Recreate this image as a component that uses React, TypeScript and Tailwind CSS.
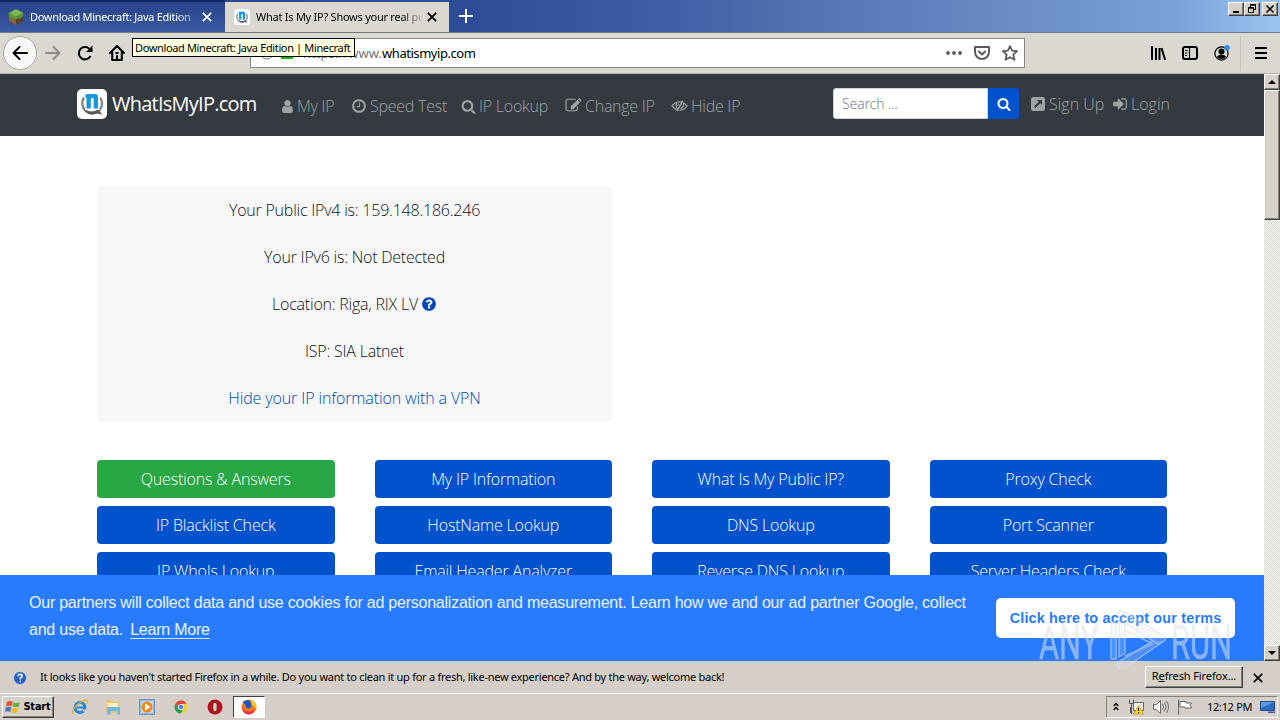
import type { ReactNode } from 'react'

const tools = [
  'Questions & Answers',
  'My IP Information',
  'What Is My Public IP?',
  'Proxy Check',
  'IP Blacklist Check',
  'HostName Lookup',
  'DNS Lookup',
  'Port Scanner',
  'IP WhoIs Lookup',
  'Email Header Analyzer',
  'Reverse DNS Lookup',
  'Server Headers Check',
]

const paths = {
  user: 'M1536 1399q0 109-62.5 187t-150.5 78h-854q-88 0-150.5-78t-62.5-187q0-85 8.5-160.5t31.5-152 58.5-131 94-89 134.5-34.5q131 128 313 128t313-128q76 0 134.5 34.5t94 89 58.5 131 31.5 152 8.5 160.5zm-256-887q0 159-112.5 271.5t-271.5 112.5-271.5-112.5-112.5-271.5 112.5-271.5 271.5-112.5 271.5 112.5 112.5 271.5z',
  clock: 'M1024 544v448q0 14-9 23t-23 9h-320q-14 0-23-9t-9-23v-64q0-14 9-23t23-9h224v-352q0-14 9-23t23-9h64q14 0 23 9t9 23zm416 352q0-148-73-273t-198-198-273-73-273 73-198 198-73 273 73 273 198 198 273 73 273-73 198-198 73-273zm224 0q0 209-103 385.5t-279.5 279.5-385.5 103-385.5-103-279.5-279.5-103-385.5 103-385.5 279.5-279.5 385.5-103 385.5 103 279.5 279.5 103 385.5z',
  search: 'M1216 832q0-185-131.5-316.5t-316.5-131.5-316.5 131.5-131.5 316.5 131.5 316.5 316.5 131.5 316.5-131.5 131.5-316.5zm512 832q0 52-38 90t-90 38q-54 0-90-38l-343-342q-179 124-399 124-143 0-273.5-55.5t-225-150-150-225-55.5-273.5 55.5-273.5 150-225 225-150 273.5-55.5 273.5 55.5 225 150 150 225 55.5 273.5q0 220-124 399l343 343q37 37 37 90z',
  edit: 'M1330 1000l130-130v330q0 119-84.5 203.5t-203.5 84.5h-832q-119 0-203.5-84.5t-84.5-203.5v-832q0-119 84.5-203.5t203.5-84.5h832q60 0 110 20l-108 108h-834q-66 0-113 47t-47 113v832q0 66 47 113t113 47h832q66 0 113-47t47-113zM640 960l760-760 288 288-760 760h-288zM1460 140l90-90q28-28 68-28t68 28l152 152q28 28 28 68t-28 68l-90 90z',
  signIn: 'M1312 896q0 26-19 45l-544 544q-19 19-45 19t-45-19-19-45v-288h-448q-26 0-45-19t-19-45v-384q0-26 19-45t45-19h448v-288q0-26 19-45t45-19 45 19l544 544q19 19 19 45zm352-352v704q0 119-84.5 203.5t-203.5 84.5h-320q-13 0-22.5-9.5t-9.5-22.5v-64q0-32 32-32h320q66 0 113-47t47-113v-704q0-66-47-113t-113-47h-320q-32 0-32-32v-64q0-32 32-32h320q119 0 203.5 84.5t84.5 203.5z',
  question: 'M1024 1376v-192q0-14-9-23t-23-9h-192q-14 0-23 9t-9 23v192q0 14 9 23t23 9h192q14 0 23-9t9-23zm256-672q0-88-55.5-163t-138.5-116-170-41q-243 0-371 213-15 24 8 42l132 100q7 6 19 6 16 0 25-12 53-68 86-92 34-24 86-24 48 0 85.5 26t37.5 59q0 38-20 61t-68 45q-63 28-115.5 86.5t-52.5 125.5v36q0 14 9 23t23 9h192q14 0 23-9t9-23q0-19 21.5-49.5t54.5-49.5q32-18 49-28.5t46-35 44.5-48 28-60.5 12.5-81zm384 192q0 209-103 385.5t-279.5 279.5-385.5 103-385.5-103-279.5-279.5-103-385.5 103-385.5 279.5-279.5 385.5-103 385.5 103 279.5 279.5 103 385.5z',
}

function Glyph({ name, className }: { name: keyof typeof paths; className: string }) {
  return (
    <svg viewBox="0 0 1792 1792" fill="currentColor" className={`shrink-0 ${className}`}>
      <path d={paths[name]} />
    </svg>
  )
}

function EyeSlash() {
  return (
    <svg viewBox="0 0 18 16" className="w-[17px] h-4 shrink-0" fill="none" stroke="currentColor" strokeWidth="1.3">
      <path d="M6.5 12.2Q3.5 11 1 8 4.5 3.500 9 3.500l1.600.2M12.500 4.500Q15 5.500 17 8q-3 4.500-8.200 4.500" />
      <path d="M12.300 2.300 6.500 13.500" strokeWidth="1.5" />
      <path d="M7 11Q3.800 7.500 6.500 4.600M13 5.500q1 3.500-3 5.500" />
      <path d="M8.500 5.500Q7 6 7.200 8" strokeWidth="1" />
    </svg>
  )
}

function SignUpIcon() {
  return (
    <svg viewBox="0 0 14 14" className="w-3.5 h-3.5 shrink-0">
      <rect width="14" height="14" rx="2.5" fill="currentColor" />
      <path d="M6 3h5v5L9.300 6.300 4.500 11 3 9.500l4.700-4.800z" fill="#343a40" />
    </svg>
  )
}

function SiteLogo({ className }: { className: string }) {
  return (
    <svg viewBox="0 0 30 30" className={`shrink-0 ${className}`}>
      <rect width="30" height="30" rx="5" fill="#fff" />
      <path d="M7 8.500C3.500 14 5.500 21 11.500 23.500 17 25.500 23 23 24.500 17.500 25.500 14 24.800 11 23 8.500" fill="none" stroke="#8d8f92" strokeWidth="2.4" />
      <path d="M6 17.500C9 23.500 17 24.500 23.500 18.500L22.500 22l3 3.800-5.500-1.300C13 27.500 7.500 24 6 17.500z" fill="#5a5a5c" />
      <path d="M8 4h11.500q3 0 3 3v14H8z" fill="#fff" />
      <path d="M9.500 5h8.500q3 0 3 3v11.500h-4.300V9.200h-2.900v10.300H9.500V9L8 7z" fill="#1797e2" />
    </svg>
  )
}

function Close({ className }: { className: string }) {
  return (
    <svg viewBox="0 0 10 10" className={`shrink-0 ${className}`}>
      <path d="M.8.8l8.4 8.4M9.2.8.8 9.2" stroke="currentColor" strokeWidth="1.7" />
    </svg>
  )
}

function WinButton({ className, children }: { className: string; children?: ReactNode }) {
  return (
    <div
      className={`flex items-center justify-center bg-[#d6d2ca] border border-t-white border-l-white border-r-[#404040] border-b-[#404040] shadow-[inset_-1px_-1px_0_#85827b] ${className}`}
    >
      {children}
    </div>
  )
}

function TabBar() {
  return (
    <div className="flex h-[33px] border-b border-[#75777c] bg-[linear-gradient(90deg,#2b4990_0%,#2c4c95_36%,#3d5fa5_52%,#5577b4_65%,#6d92cb_82%,#7ba2d8_92%,#9cc4f0_100%)]">
      <div className="flex items-center w-[225px] border-t-2 border-[#0e2568] bg-[linear-gradient(180deg,#284489,#3a59a2)] pl-2 text-white">
        <svg viewBox="0 0 16 16" className="w-4 h-4 shrink-0">
          <path d="M8 0l7.500 4L8 8 .5 4z" fill="#7cb84b" />
          <path d="M.5 4L8 8v8l-6.500-3.500z" fill="#86603f" />
          <path d="M15.500 4L8 8v8l6.500-3.500z" fill="#5b3f28" />
          <path d="M.5 4L8 8v2.500L6 9.500l-1 1-4-3zM15.500 4L8 8v2.500l3-1.500 1 1 3-3z" fill="#5a9636" />
        </svg>
        <span className="ml-1.5 w-[165px] whitespace-nowrap font-[Tahoma,'Noto_Sans',sans-serif] text-[11px] tracking-[-0.3px] [mask-image:linear-gradient(90deg,#000_88%,#0006)]">
          Download Minecraft: Java Edition
        </span>
        <Close className="w-2.5 h-2.5 ml-[7px]" />
      </div>
      <div className="flex items-center w-[224px] mt-0.5 pl-[9px] bg-[#dbd8d1] text-black">
        <SiteLogo className="w-4 h-4" />
        <span className="ml-1.5 w-[165px] whitespace-nowrap font-[Tahoma,'Noto_Sans',sans-serif] text-[11px] tracking-[-0.25px] [mask-image:linear-gradient(90deg,#000_88%,#0003)]">
          What Is My IP? Shows your real pu
        </span>
        <Close className="w-2.5 h-2.5 ml-1.5" />
      </div>
      <svg viewBox="0 0 14 14" className="w-3.5 h-3.5 mt-[9px] ml-2.5">
        <path d="M7 0v14M0 7h14" stroke="#fff" strokeWidth="2" />
      </svg>
      <div className="flex ml-auto mt-0.5 mr-0.5 h-3.5">
        <WinButton className="w-4 h-3.5">
          <svg viewBox="0 0 12 10" className="w-3 h-2.5"><path d="M3 8h6" stroke="#000" strokeWidth="2" /></svg>
        </WinButton>
        <WinButton className="w-4 h-3.5">
          <svg viewBox="0 0 12 10" className="w-3 h-2.5" fill="none" stroke="#000">
            <path d="M4.500 3V.5h5v5H8M4 1.200h6M2.500 3.500h5v5h-5zM2 4.200h6" />
          </svg>
        </WinButton>
        <WinButton className="w-4 h-3.5 ml-0.5">
          <svg viewBox="0 0 12 10" className="w-3 h-2.5"><path d="M2.500 1.500l7 7M9.500 1.500l-7 7" stroke="#000" strokeWidth="1.5" /></svg>
        </WinButton>
      </div>
    </div>
  )
}

function Toolbar() {
  return (
    <div className="flex items-center h-[41px] bg-[#dbd8d1] border-b border-[#b5b2ac] pl-[3px] text-black">
      <div className="flex items-center justify-center w-[34px] h-[34px] rounded-full bg-[#f8f7f6] border border-[#a9a6a1]">
        <svg viewBox="0 0 16 16" className="w-4 h-4" fill="none" stroke="currentColor" strokeWidth="2" strokeLinecap="round" strokeLinejoin="round">
          <path d="M15 8H1.500M7.500 2l-6 6 6 6" />
        </svg>
      </div>
      <svg viewBox="0 0 16 16" className="w-4 h-4 ml-2 text-[#8e8c88]" fill="none" stroke="currentColor" strokeWidth="2" strokeLinecap="round" strokeLinejoin="round">
        <path d="M1 8h13.500M8.500 2l6 6-6 6" />
      </svg>
      <svg viewBox="0 0 16 16" className="w-4 h-4 ml-4" fill="none" stroke="currentColor" strokeWidth="2">
        <path d="M13.500 11A6.200 6.200 0 1 1 12.300 3.700" />
        <path d="M15.500.5v6.500H9z" fill="currentColor" stroke="none" />
      </svg>
      <svg viewBox="0 0 16 16" className="w-4 h-4 ml-4" fill="none" stroke="currentColor" strokeWidth="2" strokeLinejoin="round" strokeLinecap="round">
        <path d="M1 8l7-7 7 7M3.200 7v8h9.600V7M8 15v-4" />
        <path d="M6.500 7h3v2h-3z" fill="currentColor" stroke="none" />
      </svg>
      <div className="flex items-center w-[775px] h-[30px] ml-[125px] bg-white border border-[#8b8984] pl-[9px] pr-1.5">
        <svg viewBox="0 0 14 14" className="w-3.5 h-3.5"><circle cx="7" cy="7" r="6" fill="none" stroke="#777" /></svg>
        <span className="w-3 h-3 ml-[7px] bg-[#12bc00]" />
        <span className="ml-[10px] pt-px font-[Tahoma,'Noto_Sans',sans-serif] text-[13px] tracking-[-0.45px] text-[#777]">
          <span className="tracking-[0.05px]">https://www.</span><span className="text-black">whatismyip.com</span>
        </span>
        <div className="flex items-center ml-auto text-[#5b5b5b]">
          <svg viewBox="0 0 16 4" className="w-4 h-1" fill="currentColor">
            <circle cx="2" cy="2" r="1.9" /><circle cx="8" cy="2" r="1.9" /><circle cx="14" cy="2" r="1.9" />
          </svg>
          <svg viewBox="0 0 16 16" className="w-4 h-4 ml-3" fill="none" stroke="currentColor" strokeWidth="2" strokeLinecap="round" strokeLinejoin="round">
            <path d="M1 2h14v5a7 7 0 0 1-14 0zM4.800 6.500L8 9.500l3.200-3" />
          </svg>
          <svg viewBox="0 0 16 16" className="w-4 h-4 ml-3" fill="none" stroke="currentColor" strokeWidth="1.8" strokeLinejoin="round">
            <path d="M8 1l2.100 4.700 5 .5-3.800 3.400 1.200 5.200L8 12.200l-4.500 2.600 1.200-5.200L.9 6.200l5-.5z" />
          </svg>
        </div>
      </div>
      <svg viewBox="0 0 16 16" className="w-4 h-4 ml-[125px]" stroke="currentColor">
        <path d="M2 1v14M6 3v12M9.500 3v12M11.500 3l3.700 12" strokeWidth="2" />
      </svg>
      <svg viewBox="0 0 16 16" className="w-4 h-4 ml-4" fill="none" stroke="currentColor" strokeWidth="2">
        <rect x="1" y="2" width="14" height="12" rx="2" />
        <path d="M7.500 2v12M3 5.500h2.500M3 8h2.500M3 10.500h2" strokeWidth="1.2" />
      </svg>
      <svg viewBox="0 0 16 16" className="w-4 h-4 ml-4">
        <circle cx="7.500" cy="8.500" r="6.600" fill="none" stroke="#000" strokeWidth="1.200" />
        <circle cx="7.500" cy="6.500" r="3" />
        <path d="M2.800 12Q4 9.500 7.500 9.500t4.700 2.500q-4.700 4-9.400 0z" />
        <circle cx="13" cy="2.800" r="2.800" fill="#2f8fe8" />
      </svg>
      <span className="w-px h-[34px] ml-[10px] bg-[#c4c1bb]" />
      <svg viewBox="0 0 12 12" className="w-3 h-3 ml-[14px]"><path d="M0 1h12M0 6h12M0 11h12" stroke="#000" strokeWidth="1.8" /></svg>
    </div>
  )
}

function SiteHeader() {
  return (
    <header className="flex h-[62px] bg-[#343a40] pl-[77px] text-[#a0a3a6] text-[16px] leading-6 font-light tracking-[-0.25px] whitespace-nowrap">
      <SiteLogo className="w-[30px] h-[30px] mt-[15px]" />
      <span className="ml-[5px] mt-[15px] w-[145px] text-[20px] leading-[30px] font-normal text-white tracking-[-0.75px]">WhatIsMyIP.com</span>
      <nav className="flex mt-5 ml-6 h-6">
        <div className="flex items-center w-[71px] gap-0.5"><Glyph name="user" className="w-[15px] h-[15px] -ml-px" />My IP</div>
        <div className="flex items-center w-[109px] gap-[3px]"><Glyph name="clock" className="w-4 h-4 -ml-px" />Speed Test</div>
        <div className="flex items-center w-[104px] gap-[3px]"><Glyph name="search" className="w-[15px] h-[15px]" />IP Lookup</div>
        <div className="flex items-center w-[106px] gap-1"><Glyph name="edit" className="w-4 h-4" />Change IP</div>
        <div className="flex items-center gap-[3px]"><EyeSlash />Hide IP</div>
      </nav>
      <div className="flex ml-auto mr-[94px] mt-[14px]">
        <div className="w-[155px] h-[31px] bg-white border border-[#ced4da] rounded-l-[3px] px-2 text-[14px] leading-[30px] tracking-[-0.1px] text-[#6c757d]">Search ...</div>
        <div className="flex items-center justify-center w-[31px] h-[31px] bg-[#0052cc] rounded-r-[3px] text-white"><Glyph name="search" className="w-3.5 h-3.5" /></div>
        <div className="flex items-center h-8 w-[82px] ml-3 gap-1 tracking-normal"><SignUpIcon />Sign Up</div>
        <div className="flex items-center h-8 w-[57px] gap-[3px] tracking-normal"><Glyph name="signIn" className="w-4 h-4 -ml-px" />Login</div>
      </div>
    </header>
  )
}

function CookieBar() {
  return (
    <div className="absolute inset-x-0 bottom-0 flex h-[86px] bg-[#287bff] pl-[29px] pr-[29px] text-white">
      <p className="w-[940px] pt-[14px] font-['Liberation_Sans',sans-serif] text-[16px] leading-[27px] tracking-[-0.23px] text-white/90 whitespace-nowrap">
        Our partners will collect data and use cookies for ad personalization and measurement. Learn how we and our ad partner Google, collect
        <br />
        and use data. <span className="ml-[3px] inline-block h-[18px] leading-[18px] border-b border-white/80">Learn More</span>
      </p>
      <button className="w-[239px] h-10 mt-[23px] ml-auto pt-0.5 bg-white rounded-[5px] font-['Liberation_Sans',sans-serif] font-bold text-[14.4px] tracking-[0.18px] text-[#287bff] whitespace-nowrap">
        Click here to accept our terms
      </button>
    </div>
  )
}

function Scrollbar() {
  return (
    <div className="flex flex-col w-4 bg-[repeating-conic-gradient(#fff_0_25%,#d6d2ca_0_50%)] bg-[length:2px_2px]">
      <WinButton className="h-4">
        <svg viewBox="0 0 8 4" className="w-2 h-1"><path d="M0 4l4-4 4 4z" /></svg>
      </WinButton>
      <WinButton className="h-[130px]" />
      <WinButton className="h-4 mt-auto">
        <svg viewBox="0 0 8 4" className="w-2 h-1"><path d="M0 0l4 4 4-4z" /></svg>
      </WinButton>
    </div>
  )
}

function Page() {
  return (
    <div className="flex h-[587px]">
      <main className="relative flex-1 overflow-hidden bg-white font-['Open_Sans','Noto_Sans',sans-serif]">
        <SiteHeader />
        <section className="w-[515px] h-[236px] ml-[97px] mt-[50px] pt-3 bg-[#f7f7f7] rounded-[4px] flex flex-col gap-[23px] text-center text-[16px] leading-6 tracking-[-0.22px] text-[#111417] font-light">
          <p>Your Public IPv4 is: 159.148.186.246</p>
          <p>Your IPv6 is: Not Detected</p>
          <p className="flex items-center justify-center gap-[3px]">
            Location: Riga, RIX LV <Glyph name="question" className="w-4 h-4 text-[#0047b3]" />
          </p>
          <p>ISP: SIA Latnet</p>
          <p className="text-[#0047b3] tracking-[-0.12px]">Hide your IP information with a VPN</p>
        </section>
        <section className="grid grid-cols-4 gap-x-10 gap-y-2 w-[1070px] ml-[97px] mt-[38px]">
          {tools.map((tool, i) => (
            <div
              key={tool}
              className={`h-[38px] rounded-[4px] text-center text-[16px] leading-[39px] tracking-[-0.18px] text-white font-light ${i === 0 ? 'bg-[#28a745]' : 'bg-[#0052cc]'}`}
            >
              {tool}
            </div>
          ))}
        </section>
        <CookieBar />
      </main>
      <Scrollbar />
    </div>
  )
}

function Notification() {
  return (
    <div className="flex items-center h-8 bg-[#d6cec8] border-t border-[#d4d0b8] pl-[13px] pr-[17px] text-black font-[Tahoma,'Noto_Sans',sans-serif] text-[11px] tracking-[-0.27px]">
      <svg viewBox="0 0 14 14" className="w-3.5 h-3.5">
        <circle cx="7" cy="7" r="6.5" fill="#2d5fc4" stroke="#c5cde0" />
        <path d="M5 5.200Q5.200 3.200 7.200 3.200 9.200 3.300 9.200 5 9.200 6.200 7.300 7v1.500M7.300 9.700v1.500" fill="none" stroke="#fff" strokeWidth="1.4" />
      </svg>
      <span className="ml-[13px] whitespace-nowrap">
        It looks like you haven't started Firefox in a while. Do you want to clean it up for a fresh, like-new experience? And by the way, welcome back!
      </span>
      <WinButton className="w-[98px] h-[22px] ml-auto -mt-0.5 tracking-[-0.1px] whitespace-nowrap">
        <span>R<u>e</u>fresh Firefox...</span>
      </WinButton>
      <Close className="w-2.5 h-2.5 ml-[10px]" />
    </div>
  )
}

function Taskbar() {
  return (
    <div className="flex items-center h-[27px] border-t border-white bg-[#d6cec8] pl-0.5 pr-0.5 text-black">
      <WinButton className="w-[52px] h-[22px] font-[Tahoma,'DejaVu_Sans_Condensed',sans-serif] font-bold text-[11px] tracking-[-0.2px] gap-0.5">
        <svg viewBox="0 0 16 16" className="w-4 h-4">
          <path d="M2 3q3-2 5.500 0L6.500 7.500Q4 6 1 7.300z" fill="#e8502b" />
          <path d="M8.500 3.200q3 1.500 6.500-.2L13.800 7.400q-3 1.500-6.300.2z" fill="#6fae38" />
          <path d="M.8 8.500q3-1.500 5.500 0L5.200 13Q2.500 11.500 0 13z" fill="#3d78cf" />
          <path d="M7.200 8.700q3 1.500 6.300.2L12.300 13.300q-3 1.500-6.200 0z" fill="#f5b921" />
        </svg>
        Start
      </WinButton>
      <svg viewBox="0 0 16 16" className="w-4 h-4 ml-[18px]">
        <circle cx="8" cy="8.500" r="5" fill="none" stroke="#2284d8" strokeWidth="3" />
        <path d="M5 8.500h9" stroke="#2284d8" strokeWidth="2" />
        <path d="M11 10.500h5v2h-5z" fill="#d6cec8" />
        <path d="M1 15Q-1 10 7 4.500 14-.5 15.500 2q.3 1-1 3" fill="none" stroke="#e6b32a" strokeWidth="1.3" />
      </svg>
      <svg viewBox="0 0 16 16" className="w-4 h-4 ml-[17px]">
        <path d="M1 1h5l1 1.500h7.500V14H1z" fill="#e7ca6a" />
        <path d="M2.500 4H13v4H2.500z" fill="#fff4bf" />
        <path d="M2 8h13v7.500h-2.500V12h-7v3.500H2z" fill="#72b8e4" />
      </svg>
      <svg viewBox="0 0 16 16" className="w-4 h-4 ml-[18px]">
        <rect x=".5" y=".5" width="15" height="15" fill="#8db6dc" stroke="#6d98c4" />
        <rect x="2" y="2" width="12" height="12" fill="#c3daee" />
        <circle cx="8" cy="8" r="5.5" fill="#f08a16" />
        <path d="M6 4.500L11.500 8 6 11.500z" fill="#fff" />
      </svg>
      <svg viewBox="0 0 16 16" className="w-4 h-4 ml-[18px]">
        <circle cx="8" cy="8" r="6.5" fill="#f8cf30" />
        <path d="M2.400 4.700A6.500 6.500 0 0 1 13.600 4.700L8 5 5 9.500z" fill="#db4437" />
        <path d="M2.400 4.700A6.500 6.500 0 0 0 7.500 14.500L10.700 9.500 5 9.500z" fill="#289b54" />
        <circle cx="8" cy="8" r="3" fill="#fff" /><circle cx="8" cy="8" r="2.3" fill="#4285f4" />
      </svg>
      <svg viewBox="0 0 16 16" className="w-4 h-4 ml-[18px]">
        <circle cx="8" cy="8" r="7.5" fill="#b31319" />
        <ellipse cx="8" cy="8" rx="2.3" ry="5" fill="#d6cec8" stroke="#7a0609" />
      </svg>
      <div className="flex items-center justify-center w-[32px] h-[22px] ml-[10px] bg-white border border-t-[#404040] border-l-[#404040] border-r-white border-b-white">
        <svg viewBox="0 0 16 16" className="w-4 h-4">
          <circle cx="8" cy="8" r="7.5" fill="#ff7a18" />
          <path d="M8 .5a7.500 7.500 0 0 1 7 9.500Q13 6 10 6 12 3 8 .5z" fill="#ffc928" />
          <path d="M1.500 3Q5 .5 8 1.200 11 4 10.500 7q-.5 3-3.500 2.500Q4 9 4.500 6z" fill="#2456c4" />
          <path d="M.8 6Q2 13 8 12.500q5 0 6-4-1 7-7 7Q1 14.500.8 6z" fill="#e8304a" />
        </svg>
      </div>
      <div className="flex items-center w-[172px] h-[22px] ml-auto border border-t-[#85827b] border-l-[#85827b] border-r-white border-b-white pl-1.5">
        <svg viewBox="0 0 6 10" className="w-1.5 h-2.5" fill="none" stroke="#000" strokeWidth="1.3"><path d="M.7 4L3 1.500 5.300 4M.7 8L3 5.500 5.300 8" /></svg>
        <svg viewBox="0 0 16 16" className="w-4 h-4 ml-[9px]">
          <path d="M5.500 3.500h10v8h-10z" fill="#eee" stroke="#666" />
          <path d="M1.500.5v4h4v-4M3.500 4.500V15M2.500 8v6" fill="none" stroke="#555" />
          <path d="M10.500 6.500l5 8.500h-10z" fill="#ffd51e" stroke="#b18b00" strokeWidth=".6" />
          <path d="M10.500 9v3M10.500 13v1.200" stroke="#000" />
        </svg>
        <svg viewBox="0 0 16 16" className="w-4 h-4 ml-[9px]" fill="none" stroke="#666">
          <path d="M.5 5.500h3l4-4v13l-4-4h-3z" fill="#fff" />
          <path d="M9.500 5q2 3 0 6M11.500 3.500q3 4.500 0 9M13.500 2q4 6 0 12" strokeWidth=".9" />
        </svg>
        <svg viewBox="0 0 16 16" className="w-4 h-4 ml-2" fill="#fff" stroke="#666">
          <path d="M1.500 1v14.500M3 2.500h6v1.500h5.500L13 6l1.500 3H8V8H3z" />
        </svg>
        <span className="ml-[14px] font-[Tahoma,'Noto_Sans',sans-serif] text-[11px] tracking-[-0.3px] whitespace-nowrap">12:12 PM</span>
        <svg viewBox="0 0 16 14" className="w-4 h-3.5 ml-auto mr-px">
          <path d="M.5 1.500h14v9H.5z" fill="#2b6cc4" stroke="#274a7c" />
          <path d="M1 2h13L1 8z" fill="#5c9be0" />
          <path d="M8 13h7v-1.500H8z" fill="#385f96" />
        </svg>
      </div>
    </div>
  )
}

function Watermark() {
  return (
    <svg viewBox="0 0 200 66" className="absolute left-[1036px] top-[606px] w-[200px] h-[66px] opacity-55">
      <g fill="#dde2ea" stroke="#dde2ea" strokeWidth=".5" fontFamily="Roboto, sans-serif" fontSize="48">
        <text x="3" y="53" textLength="60" lengthAdjust="spacingAndGlyphs">ANY</text>
        <text x="135" y="53" textLength="61" lengthAdjust="spacingAndGlyphs">RUN</text>
      </g>
      <g fill="#dde2ea" fillOpacity=".4" stroke="#dde2ea" strokeWidth="1.5" strokeLinejoin="round">
        <path d="M75 19q0-3 2.500-3t2.500 3v34h-5z" />
        <path d="M83 6q3-3 6 0l39 24q3 3 0 5l-6 3-33-21v30l-6 4z" />
        <path d="M128 35L89 62q-4 3-7-1-2-4 2-6l33-20" />
        <path d="M89 24l28 14-28 12" fill="none" />
      </g>
    </svg>
  )
}

export default function App() {
  return (
    <div className="relative flex flex-col w-[1280px] h-[720px] overflow-hidden">
      <TabBar />
      <Toolbar />
      <Page />
      <Notification />
      <Taskbar />
      <div className="absolute left-[132px] top-[38px] w-[223px] h-[19px] px-0.5 bg-[#ffffe1] border border-black text-black font-[Tahoma,'Noto_Sans',sans-serif] text-[11px] leading-[17px] tracking-[-0.36px] whitespace-nowrap">
        Download Minecraft: Java Edition | Minecraft
      </div>
      <Watermark />
    </div>
  )
}
